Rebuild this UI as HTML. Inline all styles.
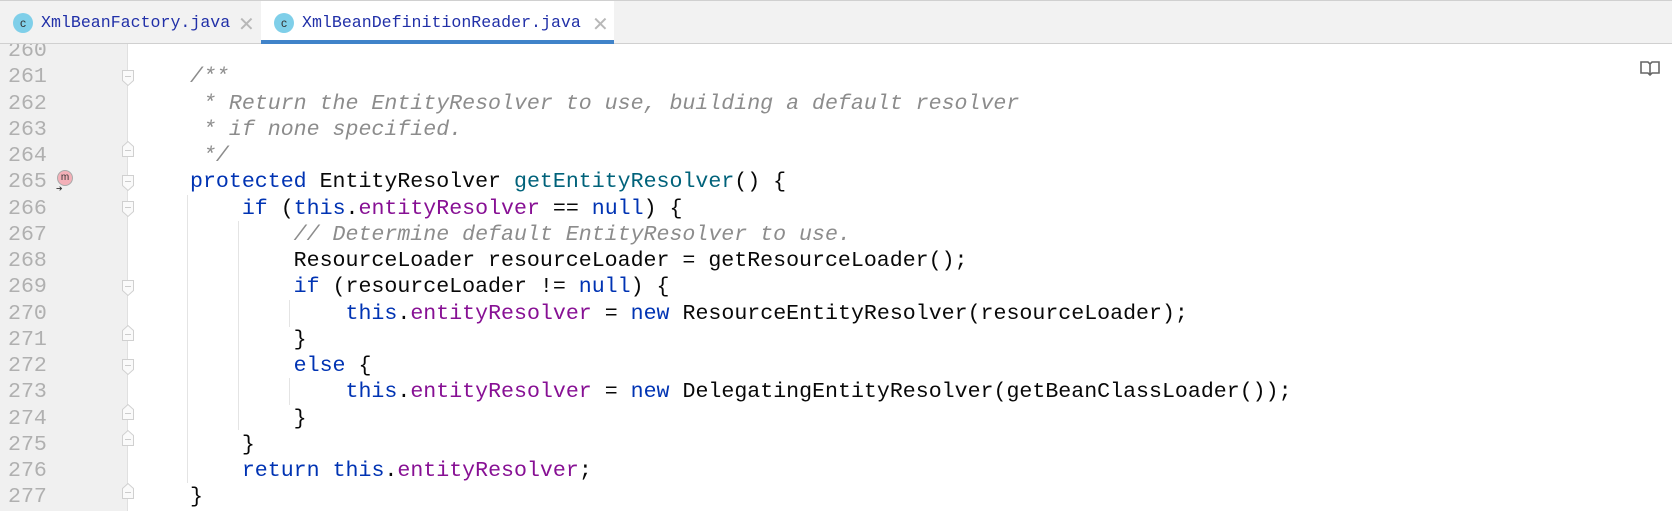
<!DOCTYPE html>
<html><head><meta charset="utf-8"><style>
body{margin:0;width:1672px;height:511px;overflow:hidden;background:#fff;font-family:"Liberation Mono",monospace;position:relative}
#tabs{position:absolute;left:0;top:0;width:1672px;height:44px;background:#f2f2f2;border-top:1px solid #d0d0d0;border-bottom:1px solid #d0d0d0;box-sizing:border-box}
.tab{position:absolute;top:0;height:43px;font-size:16.6px;color:#2130a8}
.tab .ic{position:absolute;left:13px;top:12px;width:20px;height:20px;border-radius:50%;background:#7fcfe9;color:#333;font-family:"Liberation Sans",sans-serif;font-size:12px;text-align:center;line-height:20px}
.tab .t{position:absolute;left:41px;top:12px;white-space:pre}
.tab .x{position:absolute;top:11px;color:#b8b8b8;font-family:"Liberation Sans",sans-serif;font-size:20px}
#gutter{position:absolute;left:0;top:44px;width:127px;height:467px;background:#f0f0f0;border-right:1px solid #e0e0e0}
.ln{position:absolute;left:8px;color:#b0b0b0;font-size:21.6px;line-height:26.25px}
.code{position:absolute;left:190px;font-size:21.6px;line-height:26.25px;white-space:pre;color:#080808}
.k{color:#0033b3}.f{color:#871094}.m{color:#00627a}.c{color:#8c8c8c;font-style:italic}
.g{position:absolute;width:1px;background:#e4e4e4}
.fd,.fu{position:absolute;left:121px}
</style></head><body>
<div id="tabs">
 <div class="tab" style="left:0;width:261px"><div class="ic">c</div><div class="t">XmlBeanFactory.java</div><div class="x" style="left:238px">✕</div></div>
 <div class="tab" style="left:261px;width:353px;background:#fff;border-bottom:4px solid #4083c9;height:39px"><div class="ic">c</div><div class="t">XmlBeanDefinitionReader.java</div><div class="x" style="left:331px">✕</div></div>
</div>
<div id="gutter"></div>
<div style="position:absolute;left:0;top:44px;width:1672px;height:467px;overflow:hidden">
<div class="ln" style="top:-6px">260<br>261<br>262<br>263<br>264<br>265<br>266<br>267<br>268<br>269<br>270<br>271<br>272<br>273<br>274<br>275<br>276<br>277</div>
<div class="code" style="top:-6px"> 
<span class="c">/**</span>
<span class="c"> * Return the EntityResolver to use, building a default resolver</span>
<span class="c"> * if none specified.</span>
<span class="c"> */</span>
<span class="k">protected</span> EntityResolver <span class="m">getEntityResolver</span>() {
    <span class="k">if</span> (<span class="k">this</span>.<span class="f">entityResolver</span> == <span class="k">null</span>) {
        <span class="c">// Determine default EntityResolver to use.</span>
        ResourceLoader resourceLoader = getResourceLoader();
        <span class="k">if</span> (resourceLoader != <span class="k">null</span>) {
            <span class="k">this</span>.<span class="f">entityResolver</span> = <span class="k">new</span> ResourceEntityResolver(resourceLoader);
        }
        <span class="k">else</span> {
            <span class="k">this</span>.<span class="f">entityResolver</span> = <span class="k">new</span> DelegatingEntityResolver(getBeanClassLoader());
        }
    }
    <span class="k">return</span> <span class="k">this</span>.<span class="f">entityResolver</span>;
}</div>
</div>
<div class="g" style="left:187px;top:195px;height:288px"></div>
<div class="g" style="left:238px;top:221px;height:209px"></div>
<div class="g" style="left:289px;top:300px;height:27px"></div>
<div class="g" style="left:289px;top:378px;height:27px"></div>
<svg class="fd" style="top:69px" width="14" height="18"><path d="M1.5 1.5h11v10l-5.5 5-5.5-5z" fill="#fafafa" stroke="#d0d0d0"/><path d="M4 7.5h6" stroke="#ccc"/></svg>
<svg class="fu" style="top:140px" width="14" height="18"><path d="M1.5 16.5h11v-10l-5.5-5-5.5 5z" fill="#fafafa" stroke="#d0d0d0"/><path d="M4 10.5h6" stroke="#ccc"/></svg>
<svg class="fd" style="top:174px" width="14" height="18"><path d="M1.5 1.5h11v10l-5.5 5-5.5-5z" fill="#fafafa" stroke="#d0d0d0"/><path d="M4 7.5h6" stroke="#ccc"/></svg>
<svg class="fd" style="top:200px" width="14" height="18"><path d="M1.5 1.5h11v10l-5.5 5-5.5-5z" fill="#fafafa" stroke="#d0d0d0"/><path d="M4 7.5h6" stroke="#ccc"/></svg>
<svg class="fd" style="top:279px" width="14" height="18"><path d="M1.5 1.5h11v10l-5.5 5-5.5-5z" fill="#fafafa" stroke="#d0d0d0"/><path d="M4 7.5h6" stroke="#ccc"/></svg>
<svg class="fu" style="top:324px" width="14" height="18"><path d="M1.5 16.5h11v-10l-5.5-5-5.5 5z" fill="#fafafa" stroke="#d0d0d0"/><path d="M4 10.5h6" stroke="#ccc"/></svg>
<svg class="fd" style="top:358px" width="14" height="18"><path d="M1.5 1.5h11v10l-5.5 5-5.5-5z" fill="#fafafa" stroke="#d0d0d0"/><path d="M4 7.5h6" stroke="#ccc"/></svg>
<svg class="fu" style="top:403px" width="14" height="18"><path d="M1.5 16.5h11v-10l-5.5-5-5.5 5z" fill="#fafafa" stroke="#d0d0d0"/><path d="M4 10.5h6" stroke="#ccc"/></svg>
<svg class="fu" style="top:429px" width="14" height="18"><path d="M1.5 16.5h11v-10l-5.5-5-5.5 5z" fill="#fafafa" stroke="#d0d0d0"/><path d="M4 10.5h6" stroke="#ccc"/></svg>
<svg class="fu" style="top:482px" width="14" height="18"><path d="M1.5 16.5h11v-10l-5.5-5-5.5 5z" fill="#fafafa" stroke="#d0d0d0"/><path d="M4 10.5h6" stroke="#ccc"/></svg>
<div style="position:absolute;left:57px;top:170px;width:14px;height:14px;border-radius:50%;background:#f4b0b8;border:1px solid #aaa;font-size:10px;line-height:13px;text-align:center;color:#333;font-family:'Liberation Sans',sans-serif">m</div>
<div style="position:absolute;left:56px;top:182px;font-size:11px;color:#333">➔</div>
<svg style="position:absolute;left:1640px;top:60px" width="20" height="16" viewBox="0 0 20 16"><path d="M1 2h7l2 2 2-2h7v11h-7l-2 2-2-2H1z M10 4v11" fill="none" stroke="#666" stroke-width="1.6"/></svg>
</body></html>
